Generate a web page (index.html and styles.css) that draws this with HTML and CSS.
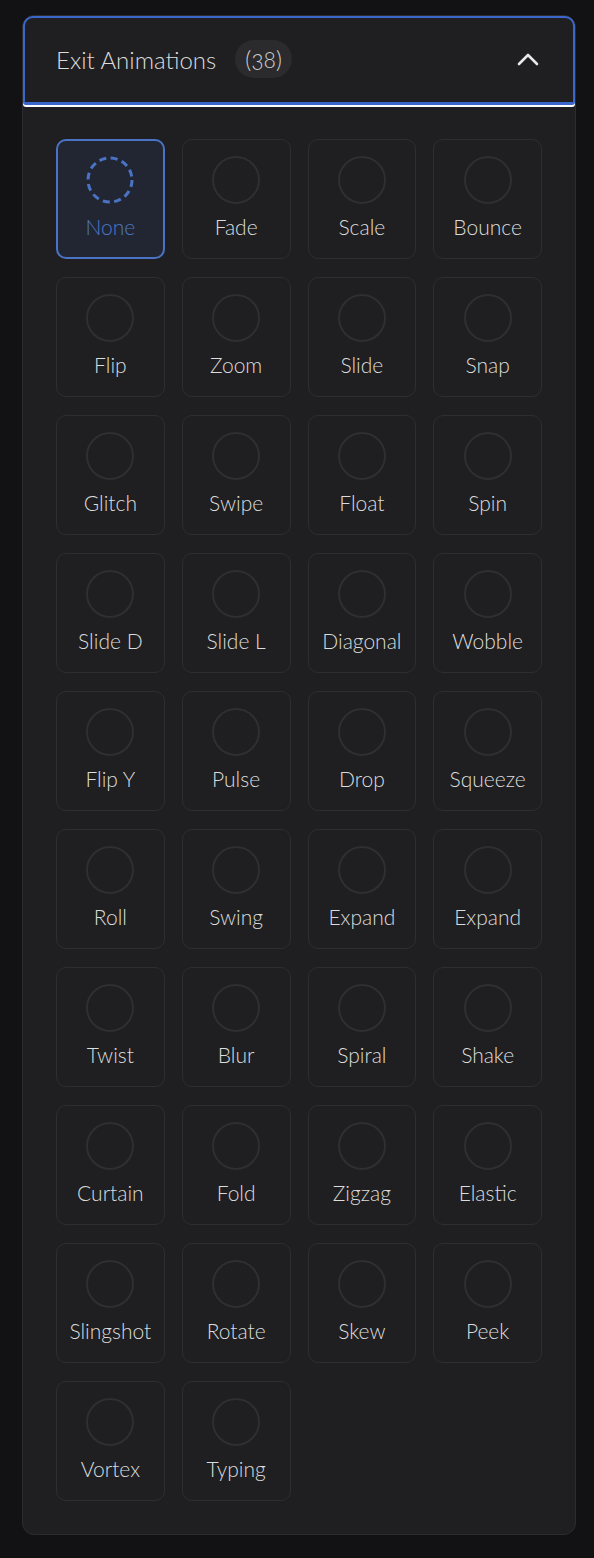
FILE: index.html
```html
<!DOCTYPE html>
<html lang="en">
<head>
  <meta charset="UTF-8" />
  <title>Exit Animations</title>
  <meta name="viewport" content="width=device-width, initial-scale=1.0" />
  <link rel="stylesheet" href="styles.css">
</head>
<body>
  <div class="panel">
    <button class="panel-head is-focused">
      <span class="panel-title">Exit Animations</span>
      <span class="count">(38)</span>
      <svg class="chevron" width="22" height="14" viewBox="0 0 22 14">
        <polyline points="2,12 11,3 20,12" fill="none" stroke="#e8e8e8" stroke-width="2.6" stroke-linecap="round" stroke-linejoin="round"/>
      </svg>
    </button>

    <div class="grid">
      <div class="anim selected">
        <svg class="ring" width="48" height="48" viewBox="0 0 48 48">
          <circle cx="24" cy="24" r="22" fill="none" stroke="#4a73c6" stroke-width="3" stroke-dasharray="7 4.52"/>
        </svg>
        <span class="anim-name">None</span>
      </div>
      <div class="anim"><span class="dot"></span><span class="anim-name">Fade</span></div>
      <div class="anim"><span class="dot"></span><span class="anim-name">Scale</span></div>
      <div class="anim"><span class="dot"></span><span class="anim-name">Bounce</span></div>
      <div class="anim"><span class="dot"></span><span class="anim-name">Flip</span></div>
      <div class="anim"><span class="dot"></span><span class="anim-name">Zoom</span></div>
      <div class="anim"><span class="dot"></span><span class="anim-name">Slide</span></div>
      <div class="anim"><span class="dot"></span><span class="anim-name">Snap</span></div>
      <div class="anim"><span class="dot"></span><span class="anim-name">Glitch</span></div>
      <div class="anim"><span class="dot"></span><span class="anim-name">Swipe</span></div>
      <div class="anim"><span class="dot"></span><span class="anim-name">Float</span></div>
      <div class="anim"><span class="dot"></span><span class="anim-name">Spin</span></div>
      <div class="anim"><span class="dot"></span><span class="anim-name">Slide D</span></div>
      <div class="anim"><span class="dot"></span><span class="anim-name">Slide L</span></div>
      <div class="anim"><span class="dot"></span><span class="anim-name">Diagonal</span></div>
      <div class="anim"><span class="dot"></span><span class="anim-name">Wobble</span></div>
      <div class="anim"><span class="dot"></span><span class="anim-name">Flip Y</span></div>
      <div class="anim"><span class="dot"></span><span class="anim-name">Pulse</span></div>
      <div class="anim"><span class="dot"></span><span class="anim-name">Drop</span></div>
      <div class="anim"><span class="dot"></span><span class="anim-name">Squeeze</span></div>
      <div class="anim"><span class="dot"></span><span class="anim-name">Roll</span></div>
      <div class="anim"><span class="dot"></span><span class="anim-name">Swing</span></div>
      <div class="anim"><span class="dot"></span><span class="anim-name">Expand</span></div>
      <div class="anim"><span class="dot"></span><span class="anim-name">Expand</span></div>
      <div class="anim"><span class="dot"></span><span class="anim-name">Twist</span></div>
      <div class="anim"><span class="dot"></span><span class="anim-name">Blur</span></div>
      <div class="anim"><span class="dot"></span><span class="anim-name">Spiral</span></div>
      <div class="anim"><span class="dot"></span><span class="anim-name">Shake</span></div>
      <div class="anim"><span class="dot"></span><span class="anim-name">Curtain</span></div>
      <div class="anim"><span class="dot"></span><span class="anim-name">Fold</span></div>
      <div class="anim"><span class="dot"></span><span class="anim-name">Zigzag</span></div>
      <div class="anim"><span class="dot"></span><span class="anim-name">Elastic</span></div>
      <div class="anim"><span class="dot"></span><span class="anim-name">Slingshot</span></div>
      <div class="anim"><span class="dot"></span><span class="anim-name">Rotate</span></div>
      <div class="anim"><span class="dot"></span><span class="anim-name">Skew</span></div>
      <div class="anim"><span class="dot"></span><span class="anim-name">Peek</span></div>
      <div class="anim"><span class="dot"></span><span class="anim-name">Vortex</span></div>
      <div class="anim"><span class="dot"></span><span class="anim-name">Typing</span></div>
    </div>
  </div>
</body>
</html>
```

FILE: styles.css
```css
body { background: #121214; color: #dcdcdc; font-family: Lato, "Open Sans", sans-serif; font-weight: 300; margin: 0; padding: 15px 18px 0 22px; }
.panel { width: 554px; box-sizing: border-box; background: #1f1f21; border: 1px solid #2c2c2f; border-radius: 12px; }

.panel-head {
  display: flex; align-items: center; width: 100%; height: 89px; box-sizing: border-box;
  padding: 0 34px 2px 31px; background: #1f1f21; border: 2px solid #1f1f21; border-bottom-width: 3px;
  border-radius: 10px 10px 3px 3px; color: #dcdcdc; font: inherit; cursor: pointer; text-align: left;
}
.panel-head.is-focused { border-color: #3b66cc; box-shadow: 0 2px 0 #ffffff; }
.panel-title { font-size: 24px; }
.count {
  margin-left: 19px; padding: 0 10px; height: 38px; line-height: 38px; border-radius: 19px;
  background: #2b2b2e; color: #cfcfcf; font-size: 23px; font-variant-numeric: oldstyle-nums;
}
.chevron { margin-left: auto; }

.grid { display: grid; grid-template-columns: repeat(4, 1fr); grid-auto-rows: 120px; gap: 18px 17px; padding: 34px 33px 33px; }
.anim {
  display: flex; flex-direction: column; align-items: center; box-sizing: border-box;
  padding-top: 16px; border: 1px solid #2e2e31; border-radius: 10px; background: #1f1f21;
}
.dot { width: 48px; height: 48px; box-sizing: border-box; border: 2px solid #2f2f32; border-radius: 50%; }
.ring { display: block; }
.anim-name { margin-top: 10px; font-size: 21px; line-height: 26px; white-space: nowrap; }
.anim.selected { background: #222633; border: 2px solid #4a73c6; padding-top: 15px; }
.anim.selected .anim-name { color: #4c78c4; }
```
